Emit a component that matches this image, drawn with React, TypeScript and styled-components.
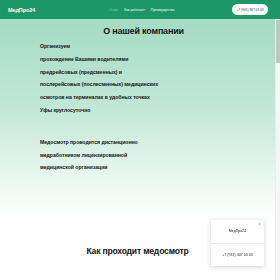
import styled, { createGlobalStyle } from 'styled-components';

const GlobalStyle = createGlobalStyle`
  html, body {
    margin: 0;
    padding: 0;
    height: 100%;
    overflow: hidden;
    font-family: "Liberation Sans", Arial, sans-serif;
    color: #151515;
  }
  #root {
    height: 100%;
  }
`;

const Page = styled.div`
  display: flex;
  flex-direction: column;
  height: 100vh;
  background: #fff;
`;

const Header = styled.header`
  flex: 0 0 19px;
  display: flex;
  align-items: center;
  padding: 0 12px 0 8px;
  background: #1d9668;
  color: #fff;
`;

const Logo = styled.div`
  font-size: 5.5px;
  font-weight: 700;
  letter-spacing: -0.1px;
`;

const Nav = styled.nav`
  display: flex;
  gap: 6px;
  margin-left: 74px;
`;

const NavLink = styled.a<{ muted?: boolean }>`
  font-size: 3.4px;
  color: ${props => props.muted ? 'rgba(255,255,255,0.55)' : '#fff'};
  text-decoration: none;
`;

const PhoneButton = styled.button`
  margin-left: auto;
  width: 36px;
  height: 11px;
  border: none;
  border-radius: 6px;
  background: #fff;
  color: #333;
  font-family: inherit;
  font-size: 3.2px;
  padding: 0;
`;

const Body = styled.div`
  flex: 1;
  display: flex;
  min-height: 0;
`;

const Scroller = styled.main`
  flex: 1;
  overflow-y: scroll;
  scrollbar-width: none;

  &::-webkit-scrollbar {
    display: none;
  }
`;

const ScrollTrack = styled.div`
  flex: 0 0 4px;
  background: #f6f6f6;
  border-left: 1px solid #ececec;
  display: flex;
  flex-direction: column;
`;

const ScrollThumb = styled.div`
  height: 43px;
  margin-top: 1px;
  background: #c4c4c4;
`;

const AboutSection = styled.section`
  background: linear-gradient(180deg, #a4dbc4 0%, #c2e8d8 45%, #eef9f3 82%, #ffffff 100%);
  padding: 7px 0 20px;
  height: 203px;
  box-sizing: border-box;
`;

const Container = styled.div`
  width: 207px;
  margin-left: 40px;
`;

const Title = styled.h2`
  margin: 0;
  text-align: center;
  font-size: 9px;
  font-weight: 600;
  letter-spacing: -0.2px;
  line-height: 10px;
`;

const Paragraph = styled.p<{ top: number }>`
  margin: ${props => props.top}px 0 0;
  font-size: 5.2px;
  font-weight: 700;
  line-height: 12.8px;
  letter-spacing: -0.05px;
`;

const StepsSection = styled.section`
  padding: 24px 0 0;
  min-height: 1400px;
`;

const StepsTitle = styled.h2`
  margin: 0;
  text-align: center;
  font-size: 8.6px;
  font-weight: 600;
  letter-spacing: -0.2px;
  line-height: 10px;
`;

const Popup = styled.div`
  position: fixed;
  right: 16px;
  bottom: 14px;
  width: 53px;
  height: 46px;
  background: #fff;
  box-shadow: 0 1px 5px rgba(0, 0, 0, 0.18);
  display: flex;
  flex-direction: column;
  font-size: 3.6px;
  color: #222;
`;

const PopupRow = styled.div<{ divider?: boolean }>`
  flex: 1;
  display: flex;
  align-items: center;
  justify-content: center;
  border-top: ${props => props.divider ? '1px solid #ececec' : 'none'};
`;

const Close = styled.span`
  position: absolute;
  top: 2px;
  right: 3px;
  font-size: 4.5px;
  color: #999;
`;

export default function App() {
  return (
    <>
      <GlobalStyle />
      <Page>
        <Header>
          <Logo>МедПро24</Logo>
          <Nav>
            <NavLink muted>О нас</NavLink>
            <NavLink>Как работает</NavLink>
            <NavLink>Преимущества</NavLink>
          </Nav>
          <PhoneButton>+7 (905) 387 03 03</PhoneButton>
        </Header>
        <Body>
          <Scroller>
            <AboutSection>
              <Container>
                <Title>О нашей компании</Title>
                <Paragraph top={4}>
                  Организуем<br />
                  прохождение Вашими водителями<br />
                  предрейсовых (предсменных) и<br />
                  послерейсовых (послесменных) медицинских<br />
                  осмотров на терминалах в удобных точках<br />
                  Уфы круглосуточно
                </Paragraph>
                <Paragraph top={19}>
                  Медосмотр проводится дистанционно<br />
                  медработником лицензированной<br />
                  медицинской организации
                </Paragraph>
              </Container>
            </AboutSection>
            <StepsSection>
              <StepsTitle>Как проходит медосмотр</StepsTitle>
            </StepsSection>
          </Scroller>
          <ScrollTrack>
            <ScrollThumb />
          </ScrollTrack>
        </Body>
        <Popup>
          <Close>×</Close>
          <PopupRow>МедПро24</PopupRow>
          <PopupRow divider>+7 (937) 307 03 03</PopupRow>
        </Popup>
      </Page>
    </>
  );
}
